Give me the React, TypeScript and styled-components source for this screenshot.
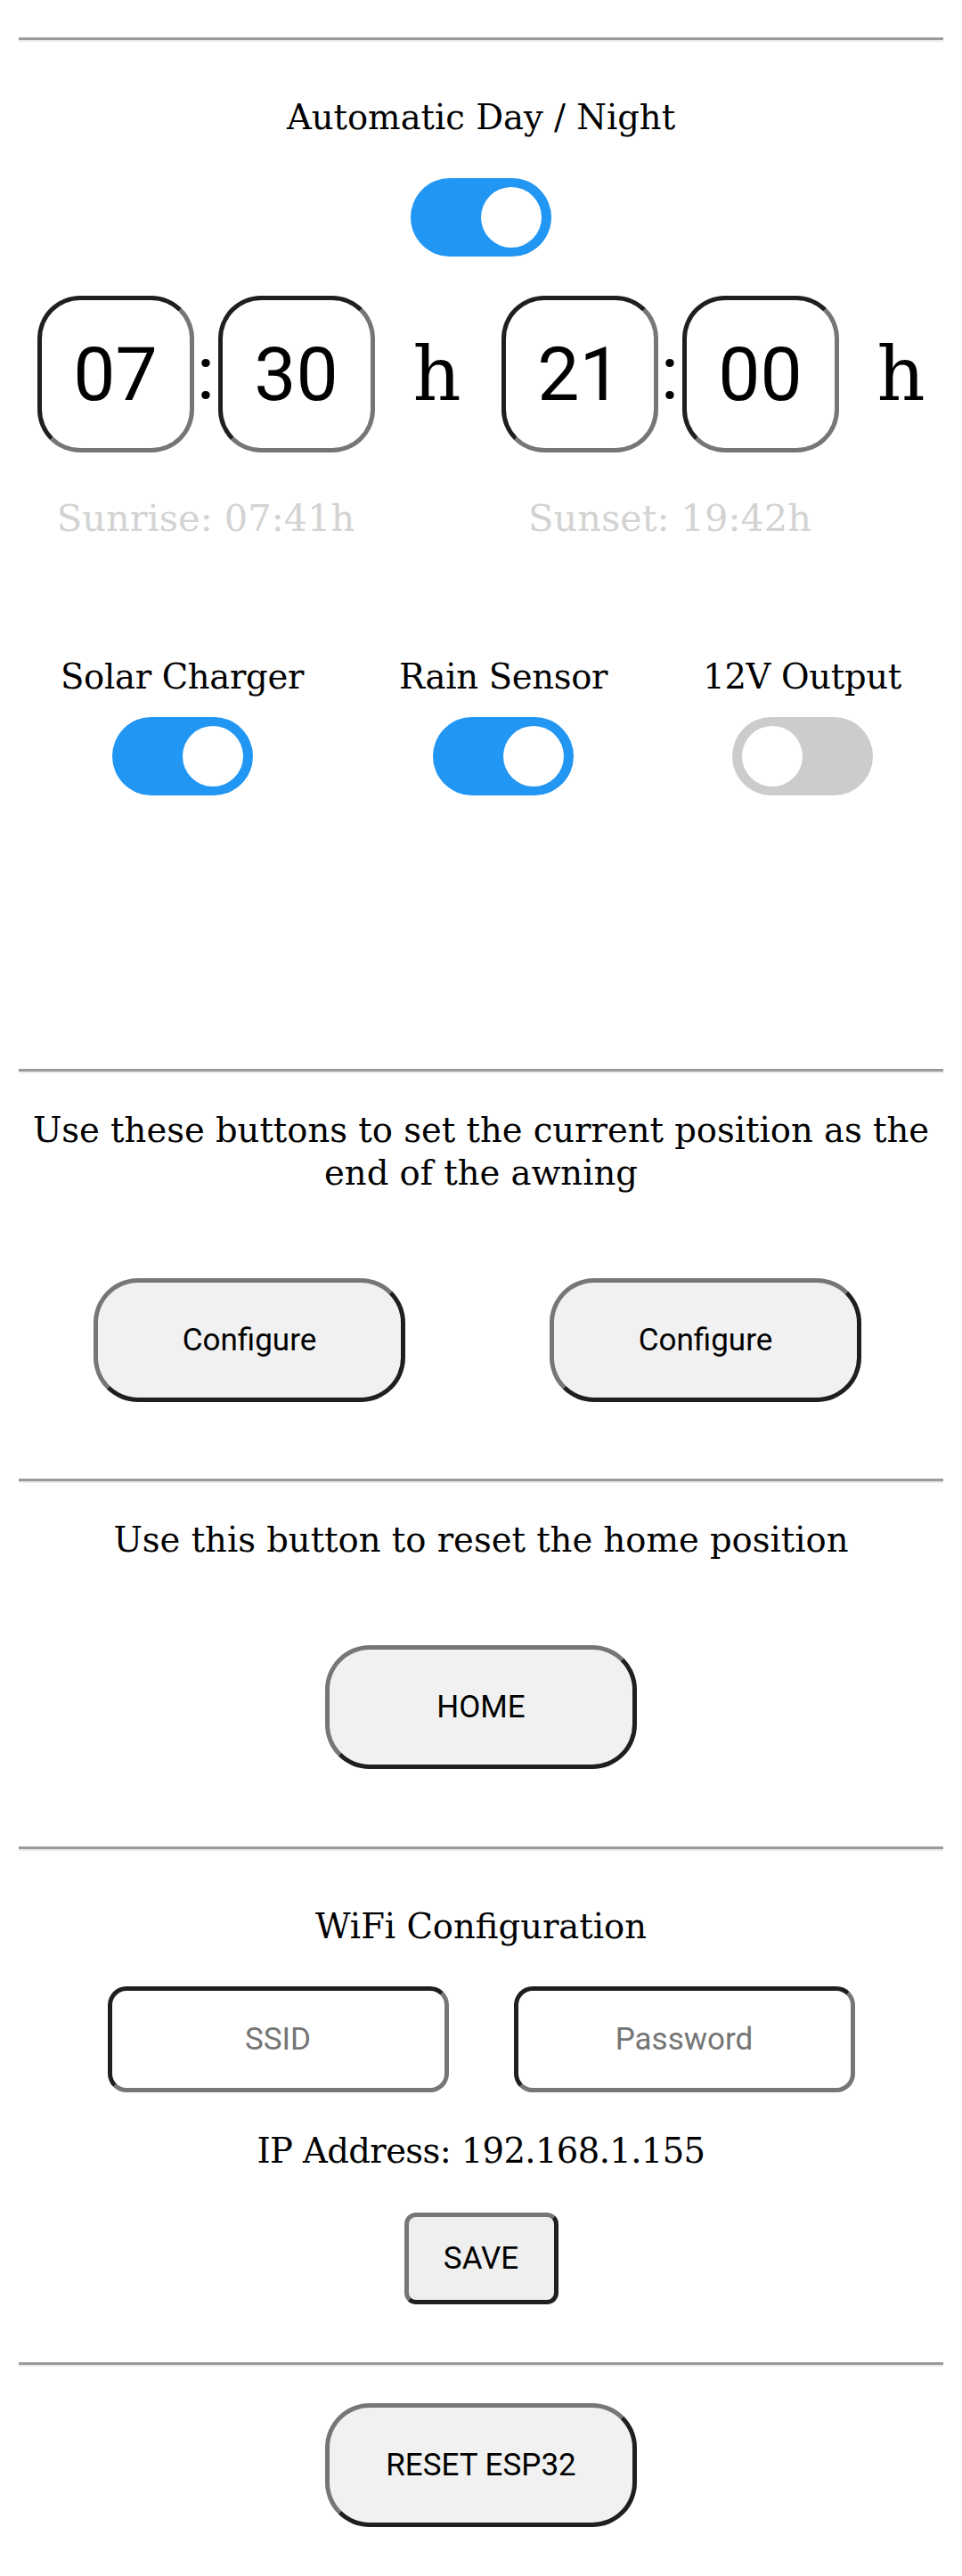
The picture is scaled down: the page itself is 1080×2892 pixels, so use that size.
import { useState } from 'react';
import styled, { createGlobalStyle } from 'styled-components';

const GlobalStyle = createGlobalStyle`
  html, body {
    margin: 0;
    padding: 0;
    background: #ffffff;
  }
  body {
    font-family: "DejaVu Serif", "Liberation Serif", serif;
    color: #000;
  }
`;

const Page = styled.div`
  width: 1080px;
  box-sizing: border-box;
  padding: 0 21px 57px;
`;

const Divider = styled.hr<{ $top: number }>`
  margin: ${p => p.$top}px 0 0;
  height: 0;
  border: none;
  border-top: 3px solid #9a9a9a;
  border-bottom: 2px solid #ececec;
`;

const Para = styled.p<{ $top: number; $tight?: boolean }>`
  margin: ${p => p.$top}px 0 0;
  font-size: 38.5px;
  line-height: 48px;
  letter-spacing: ${p => (p.$tight ? -0.6 : 0)}px;
  text-align: center;
`;

const SwitchLabel = styled.label<{ $top?: number }>`
  position: relative;
  display: block;
  width: 158px;
  height: 88px;
  margin: ${p => p.$top ?? 0}px auto 0;
  cursor: pointer;
`;

const HiddenBox = styled.input`
  position: absolute;
  opacity: 0;
  width: 0;
  height: 0;
`;

const Track = styled.span<{ $on: boolean }>`
  position: absolute;
  inset: 0;
  border-radius: 44px;
  background: ${p => (p.$on ? '#2196F3' : '#cccccc')};
  transition: background 0.4s;

  &::before {
    content: '';
    position: absolute;
    left: 11px;
    top: 10px;
    width: 68px;
    height: 68px;
    border-radius: 50%;
    background: #fff;
    transform: translateX(${p => (p.$on ? 68 : 0)}px);
    transition: transform 0.4s;
  }
`;

const TimeRow = styled.div`
  margin-top: 44px;
  display: flex;
  justify-content: center;
  gap: 45px;
`;

const TimeGroup = styled.div`
  display: flex;
  align-items: flex-start;
`;

const TimeStack = styled.div`
  display: flex;
  flex-direction: column;
  align-items: center;
`;

const Clock = styled.div`
  display: flex;
`;

const TimeInput = styled.input`
  width: 176px;
  height: 176px;
  box-sizing: border-box;
  padding: 0;
  margin: 0;
  border: 5px solid;
  border-color: #1f1f1f #767676 #767676 #1f1f1f;
  border-radius: 48px;
  background: #fff;
  color: #000;
  font-family: Roboto, "Noto Sans", sans-serif;
  font-size: 84px;
  text-align: center;
  outline: none;
`;

const Colon = styled.span`
  width: 27px;
  height: 176px;
  line-height: 176px;
  font-family: Roboto, "Noto Sans", sans-serif;
  font-size: 84px;
  text-align: center;
`;

const Unit = styled.span`
  margin-left: 43px;
  width: 54px;
  height: 176px;
  line-height: 176px;
  font-size: 84px;
`;

const SunText = styled.div`
  margin-top: 50px;
  font-size: 41.5px;
  line-height: 48px;
  color: #d3d3d3;
  white-space: nowrap;
`;

const ToggleRow = styled.div`
  margin-top: 130px;
  display: flex;
  justify-content: center;
  gap: 107px;
`;

const ToggleItem = styled.div`
  display: flex;
  flex-direction: column;
  align-items: center;
  gap: 21px;
`;

const ItemLabel = styled.span`
  font-size: 38.5px;
  line-height: 48px;
  letter-spacing: -0.3px;
  white-space: nowrap;
`;

const ButtonRow = styled.div<{ $top: number; $gap?: number; $shift?: number }>`
  margin-top: ${p => p.$top}px;
  padding-right: ${p => p.$shift ?? 0}px;
  display: flex;
  justify-content: center;
  gap: ${p => p.$gap ?? 0}px;
`;

const PushButton = styled.button<{ $compact?: boolean }>`
  width: ${p => (p.$compact ? 173 : 350)}px;
  height: ${p => (p.$compact ? 103 : 139)}px;
  box-sizing: border-box;
  padding: 0;
  margin: 0;
  border: 5px solid;
  border-color: #767676 #1f1f1f #1f1f1f #767676;
  border-radius: ${p => (p.$compact ? 13 : 50)}px;
  background: ${p => (p.$compact ? '#efefef' : '#f1f1f1')};
  color: #000;
  font-family: Roboto, "Noto Sans", sans-serif;
  font-size: 35px;
  cursor: pointer;
`;

const FieldRow = styled.div`
  margin-top: 43px;
  display: flex;
  justify-content: center;
  gap: 73px;
`;

const TextField = styled.input`
  width: 383px;
  height: 119px;
  box-sizing: border-box;
  padding: 0;
  margin: 0;
  border: 5px solid;
  border-color: #1f1f1f #767676 #767676 #1f1f1f;
  border-radius: 21px;
  background: #fff;
  font-family: Roboto, "Noto Sans", sans-serif;
  font-size: 35px;
  text-align: center;
  outline: none;

  &::placeholder {
    color: #757575;
  }
`;

type SwitchProps = { on: boolean; onToggle: () => void; top?: number };

const Switch = ({ on, onToggle, top }: SwitchProps) => (
  <SwitchLabel $top={top}>
    <HiddenBox type="checkbox" checked={on} onChange={onToggle} />
    <Track $on={on} />
  </SwitchLabel>
);

type TimeProps = { hours: string; minutes: string; note: string };

const TimeBlock = ({ hours, minutes, note }: TimeProps) => (
  <TimeGroup>
    <TimeStack>
      <Clock>
        <TimeInput type="text" inputMode="numeric" defaultValue={hours} />
        <Colon>:</Colon>
        <TimeInput type="text" inputMode="numeric" defaultValue={minutes} />
      </Clock>
      <SunText>{note}</SunText>
    </TimeStack>
    <Unit>h</Unit>
  </TimeGroup>
);

export default function App() {
  const [auto, setAuto] = useState(true);
  const [flags, setFlags] = useState({ solar: true, rain: true, out12: false });

  const flip = (key: keyof typeof flags) =>
    setFlags(prev => ({ ...prev, [key]: !prev[key] }));

  return (
    <>
      <GlobalStyle />
      <Page>
        <Divider $top={42} />
        <Para $top={61}>Automatic Day / Night</Para>
        <Switch on={auto} onToggle={() => setAuto(v => !v)} top={44} />

        <TimeRow>
          <TimeBlock hours="07" minutes="30" note="Sunrise: 07:41h" />
          <TimeBlock hours="21" minutes="00" note="Sunset: 19:42h" />
        </TimeRow>

        <ToggleRow>
          <ToggleItem>
            <ItemLabel>Solar Charger</ItemLabel>
            <Switch on={flags.solar} onToggle={() => flip('solar')} />
          </ToggleItem>
          <ToggleItem>
            <ItemLabel>Rain Sensor</ItemLabel>
            <Switch on={flags.rain} onToggle={() => flip('rain')} />
          </ToggleItem>
          <ToggleItem>
            <ItemLabel>12V Output</ItemLabel>
            <Switch on={flags.out12} onToggle={() => flip('out12')} />
          </ToggleItem>
        </ToggleRow>

        <Divider $top={307} />
        <Para $top={40}>
          Use these buttons to set the current position as the end of the awning
        </Para>
        <ButtonRow $top={94} $gap={162} $shift={8}>
          <PushButton>Configure</PushButton>
          <PushButton>Configure</PushButton>
        </ButtonRow>

        <Divider $top={86} />
        <Para $top={40}>Use this button to reset the home position</Para>
        <ButtonRow $top={94}>
          <PushButton>HOME</PushButton>
        </ButtonRow>

        <Divider $top={87} />
        <Para $top={61}>WiFi Configuration</Para>
        <FieldRow>
          <TextField type="text" placeholder="SSID" />
          <TextField type="password" placeholder="Password" />
        </FieldRow>
        <Para $top={42} $tight>IP Address: 192.168.1.155</Para>
        <ButtonRow $top={45}>
          <PushButton $compact>SAVE</PushButton>
        </ButtonRow>

        <Divider $top={65} />
        <ButtonRow $top={41}>
          <PushButton>RESET ESP32</PushButton>
        </ButtonRow>
      </Page>
    </>
  );
}
